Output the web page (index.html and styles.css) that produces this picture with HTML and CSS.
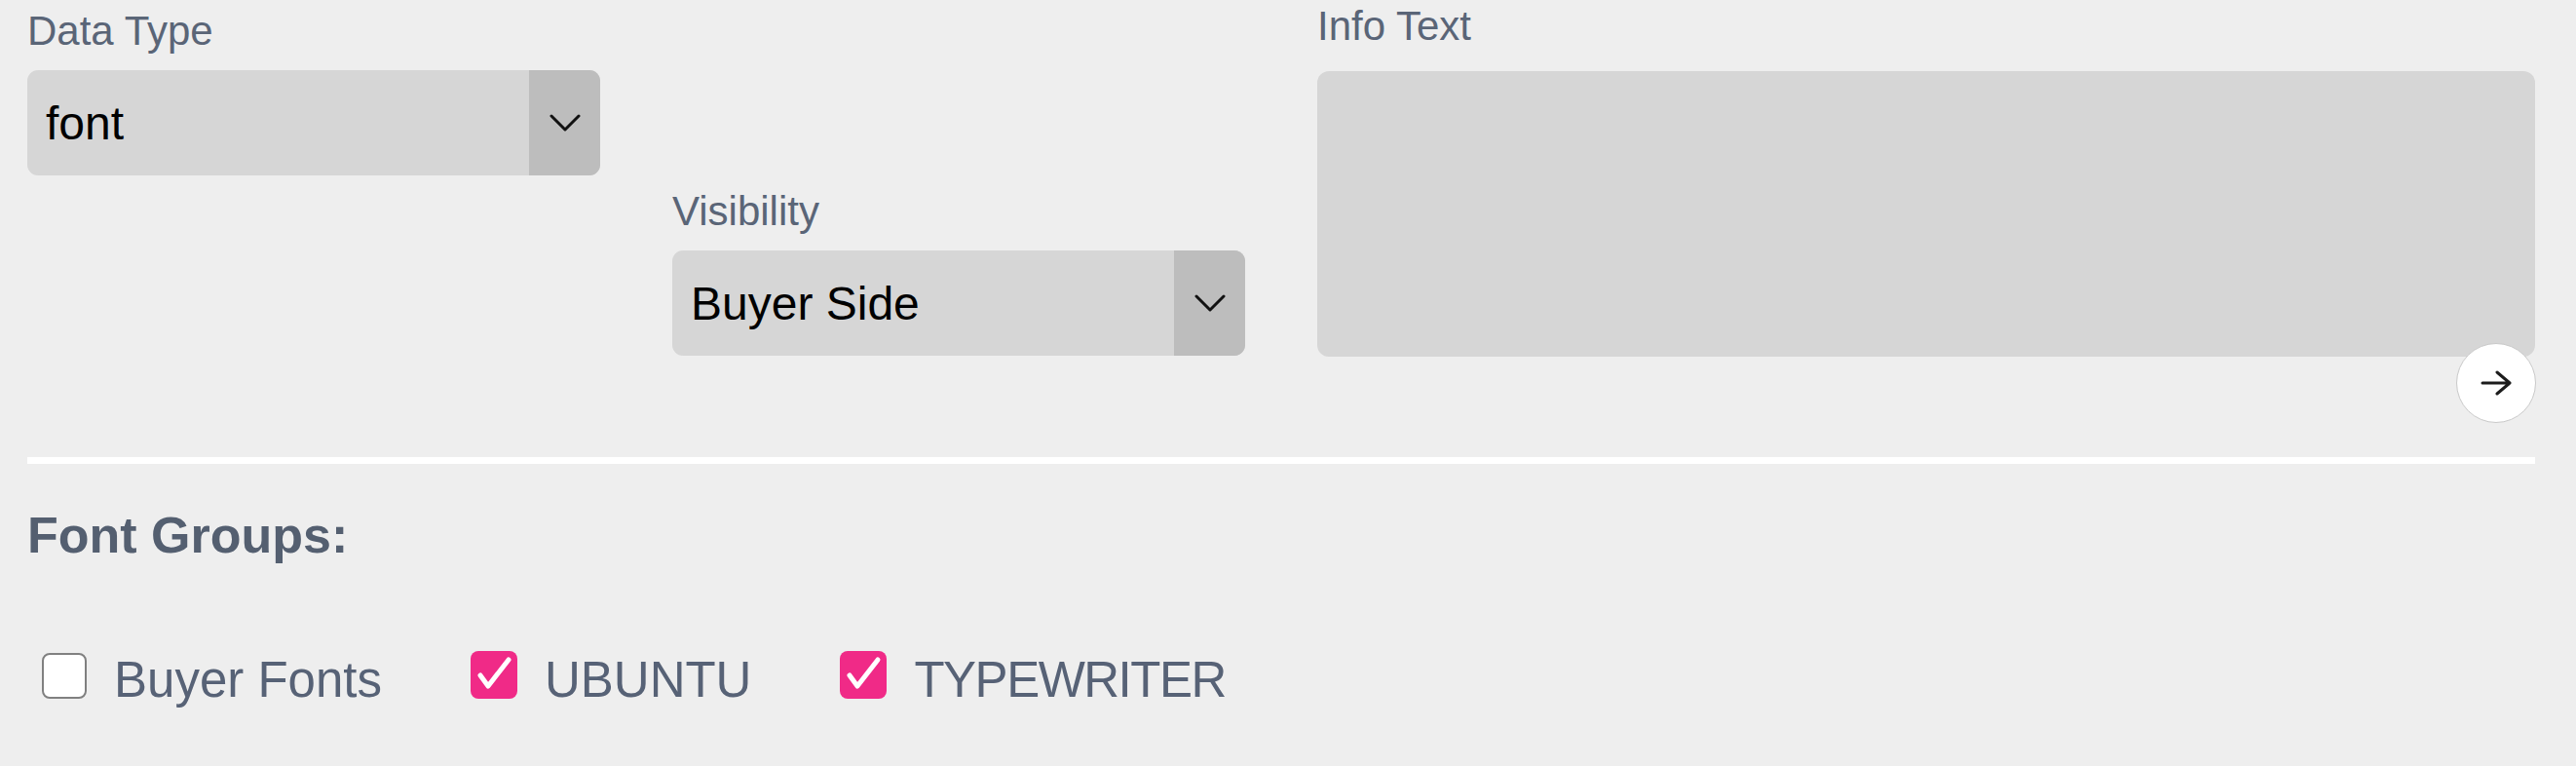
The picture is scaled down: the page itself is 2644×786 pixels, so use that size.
FILE: index.html
```html
<!DOCTYPE html>
<html lang="en">
<head>
<meta charset="utf-8">
<title>Data Type</title>
<link rel="stylesheet" href="styles.css">
</head>
<body>
<main class="page">
  <section class="fields">
    <div class="field field-type">
      <label class="label">Data Type</label>
      <div class="select">
        <span class="select-value">font</span>
        <span class="select-caret">
          <svg width="32" height="18" viewBox="0 0 32 18"><path d="M2 2 L16 16 L30 2" fill="none" stroke="#111" stroke-width="3" stroke-linecap="round" stroke-linejoin="round"/></svg>
        </span>
      </div>
    </div>
    <div class="field field-visibility">
      <label class="label">Visibility</label>
      <div class="select">
        <span class="select-value">Buyer Side</span>
        <span class="select-caret">
          <svg width="32" height="18" viewBox="0 0 32 18"><path d="M2 2 L16 16 L30 2" fill="none" stroke="#111" stroke-width="3" stroke-linecap="round" stroke-linejoin="round"/></svg>
        </span>
      </div>
    </div>
    <div class="field field-info">
      <label class="label label-info">Info Text</label>
      <textarea class="textarea"></textarea>
      <button class="submit" type="button" aria-label="Submit">
        <svg width="32" height="28" viewBox="0 0 32 28"><path d="M2 14 H30 M17 3 L30 14 L17 25" fill="none" stroke="#1c1c1c" stroke-width="3" stroke-linecap="round" stroke-linejoin="round"/></svg>
      </button>
    </div>
  </section>
  <div class="divider"></div>
  <h2 class="groups-title">Font Groups:</h2>
  <div class="groups">
    <label class="check">
      <span class="box"></span>
      <span class="check-text">Buyer Fonts</span>
    </label>
    <label class="check">
      <span class="box box-checked">
        <svg width="48" height="49" viewBox="0 0 48 49"><path d="M10 25 L18 36 L39 9" fill="none" stroke="#fff" stroke-width="5" stroke-linecap="round" stroke-linejoin="round"/></svg>
      </span>
      <span class="check-text">UBUNTU</span>
    </label>
    <label class="check">
      <span class="box box-checked">
        <svg width="48" height="49" viewBox="0 0 48 49"><path d="M10 25 L18 36 L39 9" fill="none" stroke="#fff" stroke-width="5" stroke-linecap="round" stroke-linejoin="round"/></svg>
      </span>
      <span class="check-text check-text-narrow">TYPEWRITER</span>
    </label>
  </div>
</main>
</body>
</html>
```
FILE: styles.css
```css
html, body {
  margin: 0;
  background: #eeeeee;
  font-family: "Liberation Sans", Arial, sans-serif;
}

.page {
  padding: 0 42px 0 28px;
}

.fields {
  display: grid;
  grid-template-columns: 588px 588px 1fr;
  column-gap: 74px;
  align-items: start;
}

.field {
  display: flex;
  flex-direction: column;
}

.field-type {
  padding-top: 8px;
}

.field-visibility {
  padding-top: 193px;
}

.field-info {
  padding-top: 3px;
}

.label {
  font-size: 42px;
  line-height: 48px;
  color: #5a6577;
  margin-bottom: 16px;
}

.label-info {
  margin-bottom: 22px;
}

.select {
  display: flex;
  height: 108px;
  background: #d6d6d6;
  border-radius: 11px;
  overflow: hidden;
}

.select-value {
  flex: 1;
  display: flex;
  align-items: center;
  padding-left: 19px;
  font-size: 48px;
  color: #000;
}

.select-caret {
  width: 73px;
  background: #bdbdbd;
  display: flex;
  align-items: center;
  justify-content: center;
}

.textarea {
  display: block;
  width: 100%;
  height: 293px;
  box-sizing: border-box;
  margin: 0;
  padding: 0;
  border: none;
  border-radius: 12px;
  background: #d6d6d6;
  resize: none;
  outline: none;
}

.submit {
  position: relative;
  align-self: flex-end;
  margin-top: -14px;
  margin-right: -1px;
  width: 82px;
  height: 82px;
  box-sizing: border-box;
  padding: 0;
  border-radius: 50%;
  background: #ffffff;
  border: 1.5px solid #c9c9c9;
  display: flex;
  align-items: center;
  justify-content: center;
}

.divider {
  margin-top: 35px;
  height: 7px;
  background: #ffffff;
}

.groups-title {
  margin: 43px 0 0;
  font-size: 52px;
  line-height: 60px;
  font-weight: 700;
  color: #545f70;
}

.groups {
  display: flex;
  align-items: flex-start;
  margin-top: 89px;
  padding-left: 15px;
}

.check {
  display: flex;
  align-items: flex-end;
  gap: 28px;
  margin-right: 91px;
}

.check-text {
  font-size: 51px;
  line-height: 60px;
  color: #576276;
}

.check-text-narrow {
  letter-spacing: -1.5px;
}

.box {
  display: block;
  width: 46px;
  height: 47px;
  box-sizing: border-box;
  margin-bottom: 11px;
  border: 2.5px solid #808080;
  border-radius: 8px;
  background: #ffffff;
}

.box-checked {
  width: 48px;
  height: 49px;
  border: none;
  background: #f02a87;
}

.box-checked svg {
  display: block;
}
```
